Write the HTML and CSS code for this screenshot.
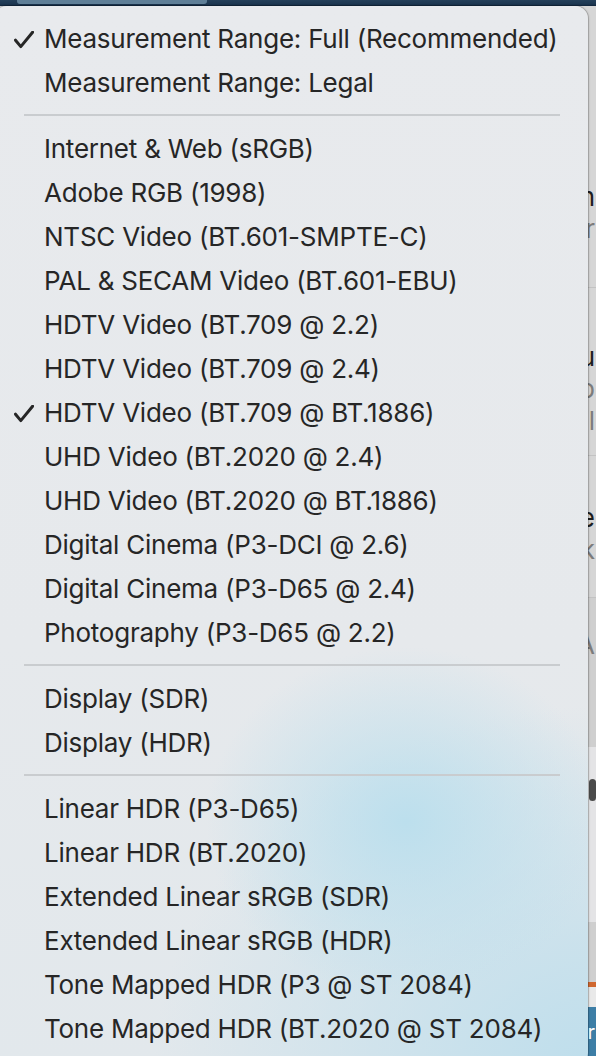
FILE: index.html
```html
<!DOCTYPE html>
<html>
<head>
<meta charset="utf-8">
<link rel="stylesheet" href="styles.css">
</head>
<body>
<div class="page">
  <div class="topbar"><div class="topbar-pill"></div></div>
  <div class="app">
    <div class="panel">
      <div class="sec sec-a">
        <div class="frag dark">n</div>
        <div class="frag grey">r</div>
      </div>
      <div class="sec sec-b">
        <div class="frag dark">u</div>
        <div class="frag grey">b</div>
        <div class="frag grey">l</div>
      </div>
      <div class="sec sec-c">
        <div class="frag dark">e</div>
        <div class="frag grey">k</div>
      </div>
      <div class="sec shaded">
        <div class="frag grey">A</div>
      </div>
      <div class="photo"><div class="head"></div></div>
      <div class="gap"></div>
      <div class="orange"></div>
      <div class="light"></div>
      <div class="banner"><span>r</span></div>
    </div>
  </div>
</div>

<div class="menu">
  <div class="item"><span class="check"><svg viewBox="0 0 20 18" width="20" height="18"><path d="M1.5 9.2 L6.8 15.6 L18.6 1.2" fill="none" stroke="#262626" stroke-width="3" stroke-linecap="round" stroke-linejoin="round"/></svg></span><span class="label">Measurement Range: Full (Recommended)</span></div>
  <div class="item"><span class="check"></span><span class="label">Measurement Range: Legal</span></div>
  <div class="sep"></div>
  <div class="item"><span class="check"></span><span class="label">Internet &amp; Web (sRGB)</span></div>
  <div class="item"><span class="check"></span><span class="label">Adobe RGB (1998)</span></div>
  <div class="item"><span class="check"></span><span class="label">NTSC Video (BT.601-SMPTE-C)</span></div>
  <div class="item"><span class="check"></span><span class="label">PAL &amp; SECAM Video (BT.601-EBU)</span></div>
  <div class="item"><span class="check"></span><span class="label">HDTV Video (BT.709 @ 2.2)</span></div>
  <div class="item"><span class="check"></span><span class="label">HDTV Video (BT.709 @ 2.4)</span></div>
  <div class="item"><span class="check"><svg viewBox="0 0 20 18" width="20" height="18"><path d="M1.5 9.2 L6.8 15.6 L18.6 1.2" fill="none" stroke="#262626" stroke-width="3" stroke-linecap="round" stroke-linejoin="round"/></svg></span><span class="label">HDTV Video (BT.709 @ BT.1886)</span></div>
  <div class="item"><span class="check"></span><span class="label">UHD Video (BT.2020 @ 2.4)</span></div>
  <div class="item"><span class="check"></span><span class="label">UHD Video (BT.2020 @ BT.1886)</span></div>
  <div class="item"><span class="check"></span><span class="label">Digital Cinema (P3-DCI @ 2.6)</span></div>
  <div class="item"><span class="check"></span><span class="label">Digital Cinema (P3-D65 @ 2.4)</span></div>
  <div class="item"><span class="check"></span><span class="label">Photography (P3-D65 @ 2.2)</span></div>
  <div class="sep"></div>
  <div class="item"><span class="check"></span><span class="label">Display (SDR)</span></div>
  <div class="item"><span class="check"></span><span class="label">Display (HDR)</span></div>
  <div class="sep"></div>
  <div class="item"><span class="check"></span><span class="label">Linear HDR (P3-D65)</span></div>
  <div class="item"><span class="check"></span><span class="label">Linear HDR (BT.2020)</span></div>
  <div class="item"><span class="check"></span><span class="label">Extended Linear sRGB (SDR)</span></div>
  <div class="item"><span class="check"></span><span class="label">Extended Linear sRGB (HDR)</span></div>
  <div class="item"><span class="check"></span><span class="label">Tone Mapped HDR (P3 @ ST 2084)</span></div>
  <div class="item"><span class="check"></span><span class="label">Tone Mapped HDR (BT.2020 @ ST 2084)</span></div>
</div>
</body>
</html>
```

FILE: styles.css
```css
html, body {
  margin: 0;
  padding: 0;
  width: 596px;
  height: 1056px;
  overflow: hidden;
  background: #d3d3d3;
}

.page {
  display: flex;
  flex-direction: column;
  height: 1056px;
}

.topbar {
  height: 6px;
  flex: none;
  background: linear-gradient(to bottom, #24405a 0%, #1c3650 70%, #0f2338 100%);
  display: flex;
  padding-left: 17px;
}
.topbar-pill {
  width: 190px;
  height: 4px;
  background: #5f7f97;
  border-radius: 0 0 3px 3px;
}

.app {
  flex: 1;
  min-height: 0;
  background: #d6d6d6;
  display: flex;
  font-family: "Inter", "Liberation Sans", sans-serif;
}

.panel {
  margin-left: 574px;
  width: 22px;
  display: flex;
  flex-direction: column;
  overflow: hidden;
}

.sec {
  flex: none;
  border-bottom: 1px solid #c3c3c3;
  display: flex;
  flex-direction: column;
  align-items: flex-end;
  gap: 2px;
}
.sec-a { padding: 176px 0 43px; }
.sec-b { padding: 54px 0 19px; }
.sec-c { padding: 47px 0 32px; }
.sec.shaded {
  background: #cfcfcf;
  padding: 32px 0 87px;
  border-bottom: none;
}

.frag {
  font-size: 26px;
  line-height: 30px;
  white-space: nowrap;
  padding-right: 1px;
}
.frag.dark { color: #1e1e1e; }
.frag.grey { color: #7c7c7c; }

.photo {
  flex: none;
  box-sizing: border-box;
  height: 175px;
  background: #e4e4e6;
  display: flex;
  padding-top: 32px;
  padding-left: 15px;
}
.head {
  width: 7px;
  height: 22px;
  border-radius: 5px;
  background: #4a4a4a;
}
.gap {
  flex: none;
  height: 60px;
  background: #cfcfcf;
}
.orange {
  flex: none;
  height: 5px;
  background: #d0672f;
}
.light {
  flex: none;
  height: 20px;
  background: #e9e9e9;
}
.banner {
  flex: 1;
  background: #3d7ea6;
  color: #ffffff;
  font-size: 20px;
  line-height: 22px;
  padding-top: 14px;
  display: flex;
  align-items: flex-start;
  justify-content: flex-end;
  padding-right: 1px;
}

.menu {
  position: absolute;
  top: 6px;
  left: -6px;
  width: 594px;
  height: 1060px;
  box-sizing: border-box;
  padding: 11px 0 12px 6px;
  border-radius: 13px;
  box-shadow: 0 0 0 1px rgba(0,0,0,0.12), 1px 0 2px rgba(0,0,0,0.18);
  background:
    radial-gradient(ellipse 200px 175px at 412px 816px, rgba(188,223,237,1) 0%, rgba(188,223,237,0.55) 45%, rgba(188,223,237,0) 100%),
    radial-gradient(ellipse 440px 360px at 600px 1060px, rgba(190,222,236,1) 0%, rgba(190,222,236,0) 100%),
    linear-gradient(to bottom, #e8eaed 0%, #e6e9ec 60%, #e2e8ec 100%);
  font-family: "Inter", "Liberation Sans", sans-serif;
  color: #262626;
}

.item {
  height: 44px;
  display: flex;
  align-items: center;
}

.check {
  width: 44px;
  height: 44px;
  flex: none;
  display: flex;
  align-items: center;
  padding-left: 14px;
  box-sizing: border-box;
}
.check svg {
  display: block;
  margin-top: 1px;
}

.label {
  font-size: 26px;
  line-height: 44px;
  white-space: nowrap;
  letter-spacing: -0.24px;
}

.sep {
  height: 2px;
  margin: 9px 28px 11px 24px;
  background: #c9cccf;
}
```
